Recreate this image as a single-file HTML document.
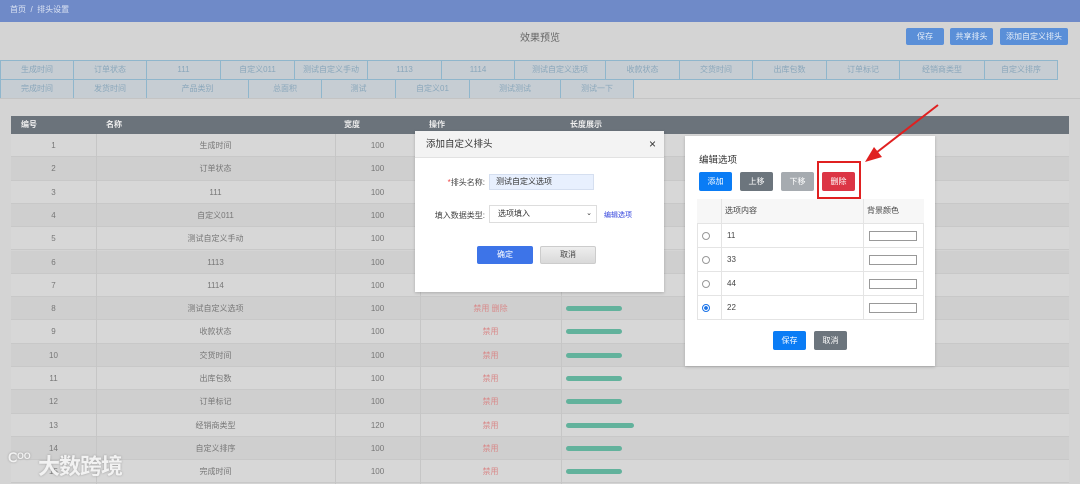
<!DOCTYPE html>
<html><head><meta charset="utf-8"><style>
*{box-sizing:border-box;margin:0;padding:0}
body{width:1080px;height:484px;overflow:hidden;background:#d4d4d4;font-family:"Liberation Sans","Noto Sans CJK SC",sans-serif;position:relative;color:#666;font-size:8px}
.a{position:absolute}
.btn{position:absolute;height:17px;line-height:17px;text-align:center;color:#e6eef8;background:#5a8fd8;border-radius:2px;font-size:8px}
.tab{position:absolute;height:20px;border:1px solid #8fb6cc;background:#c6cdd3;color:#8aa7bb;text-align:center;line-height:18px;font-size:8px}
.row{position:absolute;left:11px;width:1058px;height:23.3px;border-bottom:1px solid #c8c8c8;font-size:8px;color:#777;line-height:23px}
.row span{position:absolute;text-align:center}
.c1{left:0;width:85px}.c2{left:85px;width:239px}.c3{left:324px;width:85px}.c4{left:409px;width:141px;color:#d88a8a}
.bar{position:absolute;left:555px;top:9px;height:5px;border-radius:3px;background:#62b29c;width:56px}
.cl{position:absolute;top:134px;width:1px;height:350px;background:#c6c6c6}
.b2{position:absolute;height:19px;line-height:19px;text-align:center;color:#fff;border-radius:2px;font-size:8px;width:33px}
.tr{position:absolute;left:697px;width:227px;height:24px;border-top:1px solid #e4e4e4;font-size:8px;color:#444;line-height:24px}
.rad{position:absolute;left:5px;top:8px;width:8px;height:8px;border:1px solid #999;border-radius:50%}
.col{position:absolute;left:172px;top:7px;width:48px;height:10px;border:1px solid #999;background:#fff}
</style></head><body>
<div class="a" style="left:0;top:0;width:1080px;height:22px;background:#6f8ac8;color:#dde4f3;line-height:19px;padding-left:10px">首页 &nbsp;/&nbsp; 排头设置</div>
<div class="a" style="left:0;top:29px;width:1080px;text-align:center;font-size:10px;color:#666">效果预览</div>
<div class="btn" style="left:906px;top:28px;width:38px">保存</div>
<div class="btn" style="left:950px;top:28px;width:43px">共享排头</div>
<div class="btn" style="left:1000px;top:28px;width:68px">添加自定义排头</div>

<div class="tab" style="left:0;top:60px;width:74px">生成时间</div>
<div class="tab" style="left:73px;top:60px;width:74px">订单状态</div>
<div class="tab" style="left:146px;top:60px;width:75px">111</div>
<div class="tab" style="left:220px;top:60px;width:75px">自定义011</div>
<div class="tab" style="left:294px;top:60px;width:74px">测试自定义手动</div>
<div class="tab" style="left:367px;top:60px;width:75px">1113</div>
<div class="tab" style="left:441px;top:60px;width:74px">1114</div>
<div class="tab" style="left:514px;top:60px;width:92px">测试自定义选项</div>
<div class="tab" style="left:605px;top:60px;width:75px">收款状态</div>
<div class="tab" style="left:679px;top:60px;width:74px">交货时间</div>
<div class="tab" style="left:752px;top:60px;width:75px">出库包数</div>
<div class="tab" style="left:826px;top:60px;width:74px">订单标记</div>
<div class="tab" style="left:899px;top:60px;width:86px">经销商类型</div>
<div class="tab" style="left:984px;top:60px;width:74px">自定义排序</div>
<div class="tab" style="left:0;top:79px;width:74px">完成时间</div>
<div class="tab" style="left:73px;top:79px;width:74px">发货时间</div>
<div class="tab" style="left:146px;top:79px;width:103px">产品类别</div>
<div class="tab" style="left:248px;top:79px;width:74px">总面积</div>
<div class="tab" style="left:321px;top:79px;width:75px">测试</div>
<div class="tab" style="left:395px;top:79px;width:75px">自定义01</div>
<div class="tab" style="left:469px;top:79px;width:92px">测试测试</div>
<div class="tab" style="left:560px;top:79px;width:74px">测试一下</div>
<div class="a" style="left:0;top:98px;width:1080px;height:1px;background:#c4c4c4"></div>

<div class="a" style="left:11px;top:116px;width:1058px;height:18px;background:#6b737b;color:#eee;font-weight:bold;line-height:18px">
<span class="a" style="left:10px">编号</span><span class="a" style="left:95px">名称</span><span class="a" style="left:333px">宽度</span><span class="a" style="left:418px">操作</span><span class="a" style="left:559px">长度展示</span></div>

<div class="row" style="top:134px;background:#d7d7d7"><span class="c1">1</span><span class="c2">生成时间</span><span class="c3">100</span></div>
<div class="row" style="top:157.3px;background:#cfcfcf"><span class="c1">2</span><span class="c2">订单状态</span><span class="c3">100</span></div>
<div class="row" style="top:180.6px;background:#d7d7d7"><span class="c1">3</span><span class="c2">111</span><span class="c3">100</span></div>
<div class="row" style="top:203.9px;background:#cfcfcf"><span class="c1">4</span><span class="c2">自定义011</span><span class="c3">100</span></div>
<div class="row" style="top:227.2px;background:#d7d7d7"><span class="c1">5</span><span class="c2">测试自定义手动</span><span class="c3">100</span></div>
<div class="row" style="top:250.5px;background:#cfcfcf"><span class="c1">6</span><span class="c2">1113</span><span class="c3">100</span></div>
<div class="row" style="top:273.8px;background:#d7d7d7"><span class="c1">7</span><span class="c2">1114</span><span class="c3">100</span></div>
<div class="row" style="top:297.1px;background:#cfcfcf"><span class="c1">8</span><span class="c2">测试自定义选项</span><span class="c3">100</span><span class="c4">禁用 删除</span><div class="bar"></div></div>
<div class="row" style="top:320.4px;background:#d7d7d7"><span class="c1">9</span><span class="c2">收款状态</span><span class="c3">100</span><span class="c4">禁用</span><div class="bar"></div></div>
<div class="row" style="top:343.7px;background:#cfcfcf"><span class="c1">10</span><span class="c2">交货时间</span><span class="c3">100</span><span class="c4">禁用</span><div class="bar"></div></div>
<div class="row" style="top:367px;background:#d7d7d7"><span class="c1">11</span><span class="c2">出库包数</span><span class="c3">100</span><span class="c4">禁用</span><div class="bar"></div></div>
<div class="row" style="top:390.3px;background:#cfcfcf"><span class="c1">12</span><span class="c2">订单标记</span><span class="c3">100</span><span class="c4">禁用</span><div class="bar"></div></div>
<div class="row" style="top:413.6px;background:#d7d7d7"><span class="c1">13</span><span class="c2">经销商类型</span><span class="c3">120</span><span class="c4">禁用</span><div class="bar" style="width:68px"></div></div>
<div class="row" style="top:436.9px;background:#cfcfcf"><span class="c1">14</span><span class="c2">自定义排序</span><span class="c3">100</span><span class="c4">禁用</span><div class="bar"></div></div>
<div class="row" style="top:460.2px;background:#d7d7d7"><span class="c1">15</span><span class="c2">完成时间</span><span class="c3">100</span><span class="c4">禁用</span><div class="bar"></div></div>
<div class="cl" style="left:96px"></div><div class="cl" style="left:335px"></div><div class="cl" style="left:420px"></div><div class="cl" style="left:561px"></div>

<div class="a" style="left:8px;top:450px;font-size:13px;color:#f2f2f2;font-weight:bold;text-shadow:0 0 2px #999">Ⅽᴼᴼ</div>
<div class="a" style="left:38px;top:449px;font-size:22px;color:#f2f2f2;font-weight:bold;letter-spacing:-1px;text-shadow:0 0 2px #999">大数跨境</div>

<!-- dialog 1 -->
<div class="a" style="left:415px;top:131px;width:249px;height:161px;background:#fff;box-shadow:0 1px 3px rgba(0,0,0,.2)">
<div class="a" style="left:0;top:0;width:249px;height:27px;background:#f3f3f3;border-bottom:1px solid #e2e2e2;font-size:9.5px;color:#333;line-height:27px;padding-left:11px">添加自定义排头<span class="a" style="right:8px;top:0;font-size:12px;color:#333">×</span></div>
<div class="a" style="left:20px;top:46px;width:50px;text-align:right;font-size:8px;color:#444"><span style="color:#e44">*</span>排头名称:</div>
<div class="a" style="left:74px;top:43px;width:105px;height:16px;background:#e8f0fe;border:1px solid #d5dff0;font-size:8px;color:#333;line-height:14px;padding-left:6px">测试自定义选项</div>
<div class="a" style="left:10px;top:79px;width:60px;text-align:right;font-size:8px;color:#444">填入数据类型:</div>
<div class="a" style="left:74px;top:74px;width:108px;height:18px;border:1px solid #ddd;background:#fff;font-size:8px;color:#333;line-height:16px;padding-left:8px">选项填入<span class="a" style="right:4px;top:0;font-size:7px">⌄</span></div>
<div class="a" style="left:189px;top:79px;font-size:7px;color:#3344dd">编辑选项</div>
<div class="a" style="left:62px;top:115px;width:56px;height:18px;background:#3d74e8;border-radius:2px;color:#fff;text-align:center;line-height:18px;font-size:8px">确定</div>
<div class="a" style="left:125px;top:115px;width:56px;height:18px;background:linear-gradient(#eee,#d9d9d9);border:1px solid #ccc;border-radius:2px;color:#444;text-align:center;line-height:16px;font-size:8px">取消</div>
</div>

<!-- dialog 2 -->
<div class="a" style="left:685px;top:136px;width:250px;height:230px;background:#fff;box-shadow:0 1px 3px rgba(0,0,0,.2)"></div>
<div class="a" style="left:699px;top:152px;font-size:9.5px;color:#333">编辑选项</div>
<div class="b2" style="left:699px;top:172px;background:#0a7cf5">添加</div>
<div class="b2" style="left:740px;top:172px;background:#6c757d">上移</div>
<div class="b2" style="left:781px;top:172px;background:#a6abb0">下移</div>
<div class="b2" style="left:822px;top:172px;background:#dc3545">删除</div>
<div class="a" style="left:817px;top:161px;width:44px;height:38px;border:2px solid #e02020"></div>
<div class="a" style="left:697px;top:199px;width:227px;height:121px;border:1px solid #e4e4e4"></div>
<div class="tr" style="top:199px;background:#f7f7f7;border-top:none"><span class="a" style="left:28px">选项内容</span><span class="a" style="left:170px">背景颜色</span></div>
<div class="tr" style="top:223px"><div class="rad"></div><span class="a" style="left:30px">11</span><div class="col"></div></div>
<div class="tr" style="top:247px"><div class="rad"></div><span class="a" style="left:30px">33</span><div class="col"></div></div>
<div class="tr" style="top:271px"><div class="rad"></div><span class="a" style="left:30px">44</span><div class="col"></div></div>
<div class="tr" style="top:295px"><div class="rad" style="border-color:#1a73e8;background:radial-gradient(#1a73e8 40%,#fff 50%)"></div><span class="a" style="left:30px">22</span><div class="col"></div></div>
<div class="a" style="left:721px;top:199px;width:1px;height:121px;background:#e4e4e4"></div>
<div class="a" style="left:863px;top:199px;width:1px;height:121px;background:#e4e4e4"></div>
<div class="b2" style="left:773px;top:331px;background:#0a7cf5">保存</div>
<div class="b2" style="left:814px;top:331px;background:#6c757d">取消</div>

<svg class="a" style="left:850px;top:100px" width="100" height="70"><line x1="88" y1="5" x2="22" y2="56" stroke="#e02020" stroke-width="2"/><polygon points="15,62 24,47 32,57" fill="#e02020"/></svg>
</body></html>
